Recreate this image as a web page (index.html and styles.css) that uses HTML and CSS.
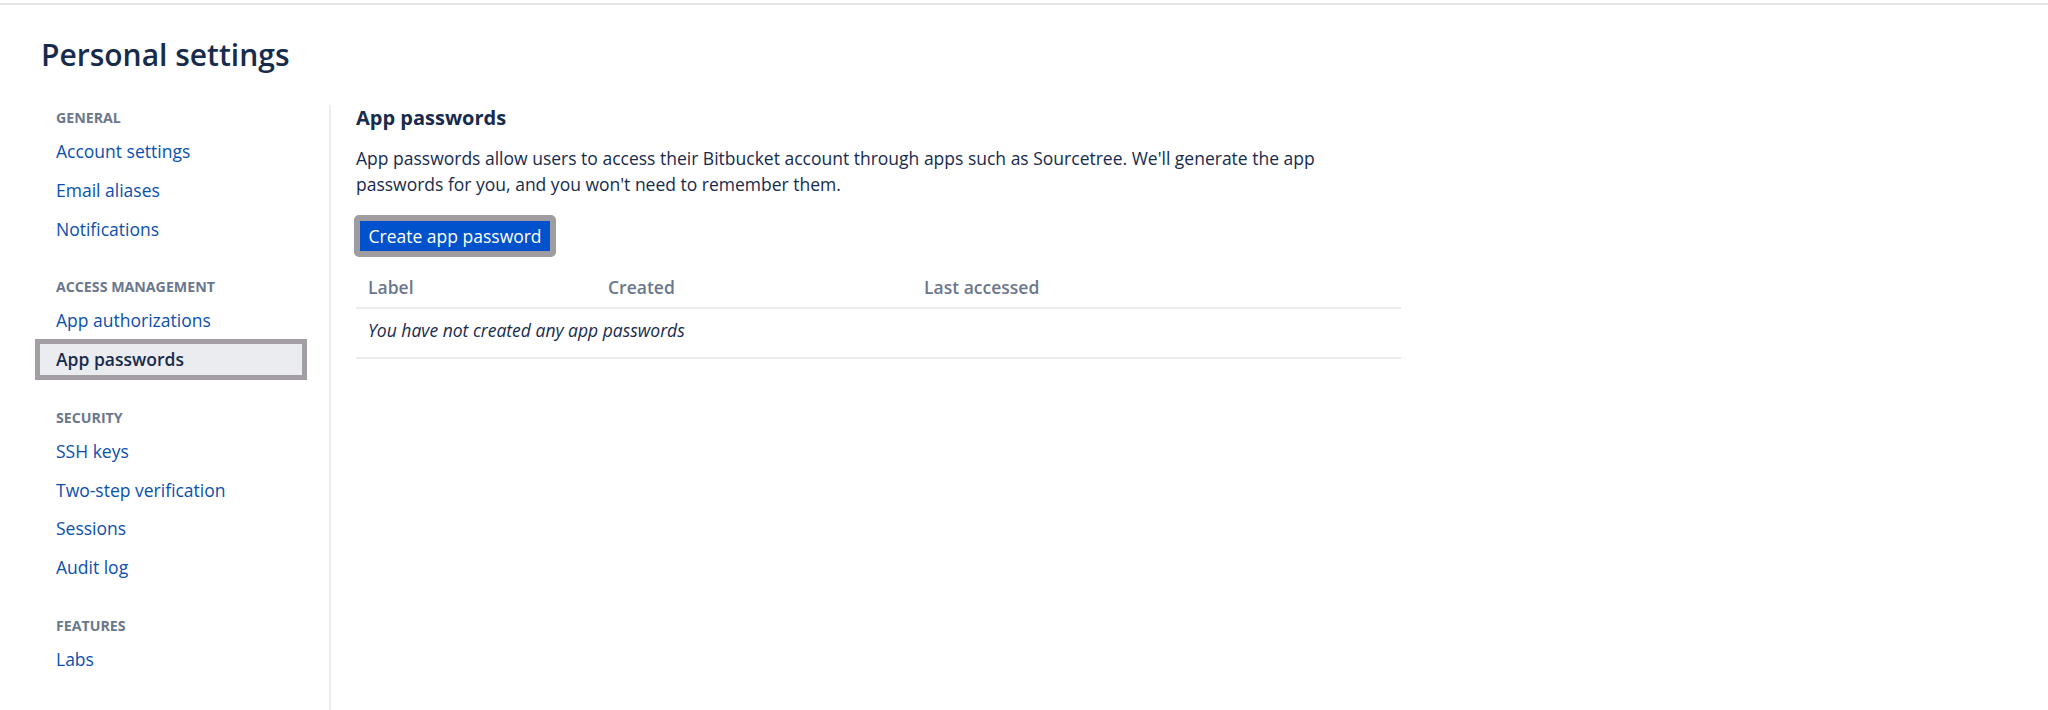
FILE: index.html
```html
<!DOCTYPE html>
<html lang="en">
<head>
<meta charset="utf-8">
<title>Personal settings</title>
<link rel="stylesheet" href="styles.css">
</head>
<body>
<div class="topbar"></div>
<h1 class="page-title">Personal settings</h1>
<div class="layout">
  <nav class="sidebar">
    <div class="group">
      <div class="group-title">General</div>
      <a class="nav-item" href="#">Account settings</a>
      <a class="nav-item" href="#">Email aliases</a>
      <a class="nav-item" href="#">Notifications</a>
    </div>
    <div class="group">
      <div class="group-title">Access management</div>
      <a class="nav-item" href="#">App authorizations</a>
      <a class="nav-item selected" href="#">App passwords</a>
    </div>
    <div class="group">
      <div class="group-title">Security</div>
      <a class="nav-item" href="#">SSH keys</a>
      <a class="nav-item" href="#">Two-step verification</a>
      <a class="nav-item" href="#">Sessions</a>
      <a class="nav-item" href="#">Audit log</a>
    </div>
    <div class="group">
      <div class="group-title">Features</div>
      <a class="nav-item" href="#">Labs</a>
    </div>
  </nav>
  <main class="main">
    <h2 class="section-title">App passwords</h2>
    <p class="intro">App passwords allow users to access their Bitbucket account through apps such as Sourcetree. We'll generate the app passwords for you, and you won't need to remember them.</p>
    <button class="primary-btn" type="button">Create app password</button>
    <table class="pw-table">
      <thead>
        <tr>
          <th class="col-label">Label</th>
          <th class="col-created">Created</th>
          <th class="col-accessed">Last accessed</th>
        </tr>
      </thead>
      <tbody>
        <tr>
          <td class="empty" colspan="3">You have not created any app passwords</td>
        </tr>
      </tbody>
    </table>
  </main>
</div>
</body>
</html>
```
FILE: styles.css
```css
html, body {
  margin: 0;
  padding: 0;
  background: #ffffff;
}

body {
  font-family: "Open Sans", "Noto Sans", "Liberation Sans", sans-serif;
  color: #172b4d;
  font-size: 17.5px;
  line-height: 25.7px;
}

.topbar {
  height: 2px;
  margin-top: 3px;
  background: #e4e5e8;
}

.page-title {
  margin: 32px 0 0 41px;
  font-size: 30px;
  line-height: 36px;
  font-weight: 600;
  color: #172b4d;
}

.layout {
  display: flex;
  margin-top: 32px;
  padding-left: 36px;
}

.sidebar {
  width: 293px;
  min-height: 602px;
  padding-top: 3px;
  border-right: 2px solid #ebecf0;
  box-sizing: content-box;
}

.group + .group {
  margin-top: 29px;
}

.group-title {
  height: 20px;
  line-height: 20px;
  padding-left: 20px;
  margin-bottom: 4px;
  font-size: 14.2px;
  font-weight: 700;
  text-transform: uppercase;
  color: #6b778c;
}

.nav-item {
  display: block;
  width: 270px;
  height: 38.75px;
  line-height: 38.75px;
  padding-left: 20px;
  box-sizing: border-box;
  color: #0b4fae;
  text-decoration: none;
  font-size: 17.5px;
}

.nav-item.selected {
  background: #ebecf0;
  color: #172b4d;
  font-weight: 600;
  outline: 5px solid #a29ea3;
  outline-offset: -4px;
}

.main {
  padding-left: 25px;
  padding-top: 1px;
  width: 1045px;
}

.section-title {
  margin: 0;
  font-size: 20px;
  line-height: 24px;
  font-weight: 700;
  color: #172b4d;
}

.intro {
  margin: 16px 0 0;
  font-size: 17.5px;
  line-height: 25.7px;
}

.primary-btn {
  display: block;
  margin-top: 19.6px;
  height: 37.5px;
  padding: 0 12.5px;
  border: none;
  border-radius: 3px;
  background: #0052cc;
  color: #ffffff;
  font-family: inherit;
  font-size: 17.5px;
  outline: 6px solid #a09da1;
  outline-offset: -4px;
}

.pw-table {
  margin-top: 12.2px;
  width: 1045px;
  border-collapse: collapse;
  table-layout: fixed;
}

.pw-table th {
  text-align: left;
  padding: 8.75px 12px 6px;
  font-weight: 600;
  color: #6b778c;
  font-size: 17.5px;
  line-height: 25.7px;
  border-bottom: 2px solid #ebecf0;
}

.col-label { width: 216px; }
.col-created { width: 292px; }
.col-accessed { width: 465px; }

.pw-table td {
  padding: 9px 12px 13px;
  border-bottom: 2px solid #ebecf0;
  font-size: 17.5px;
  line-height: 25.7px;
}

.pw-table td.empty {
  font-style: italic;
  color: #172b4d;
}
```
